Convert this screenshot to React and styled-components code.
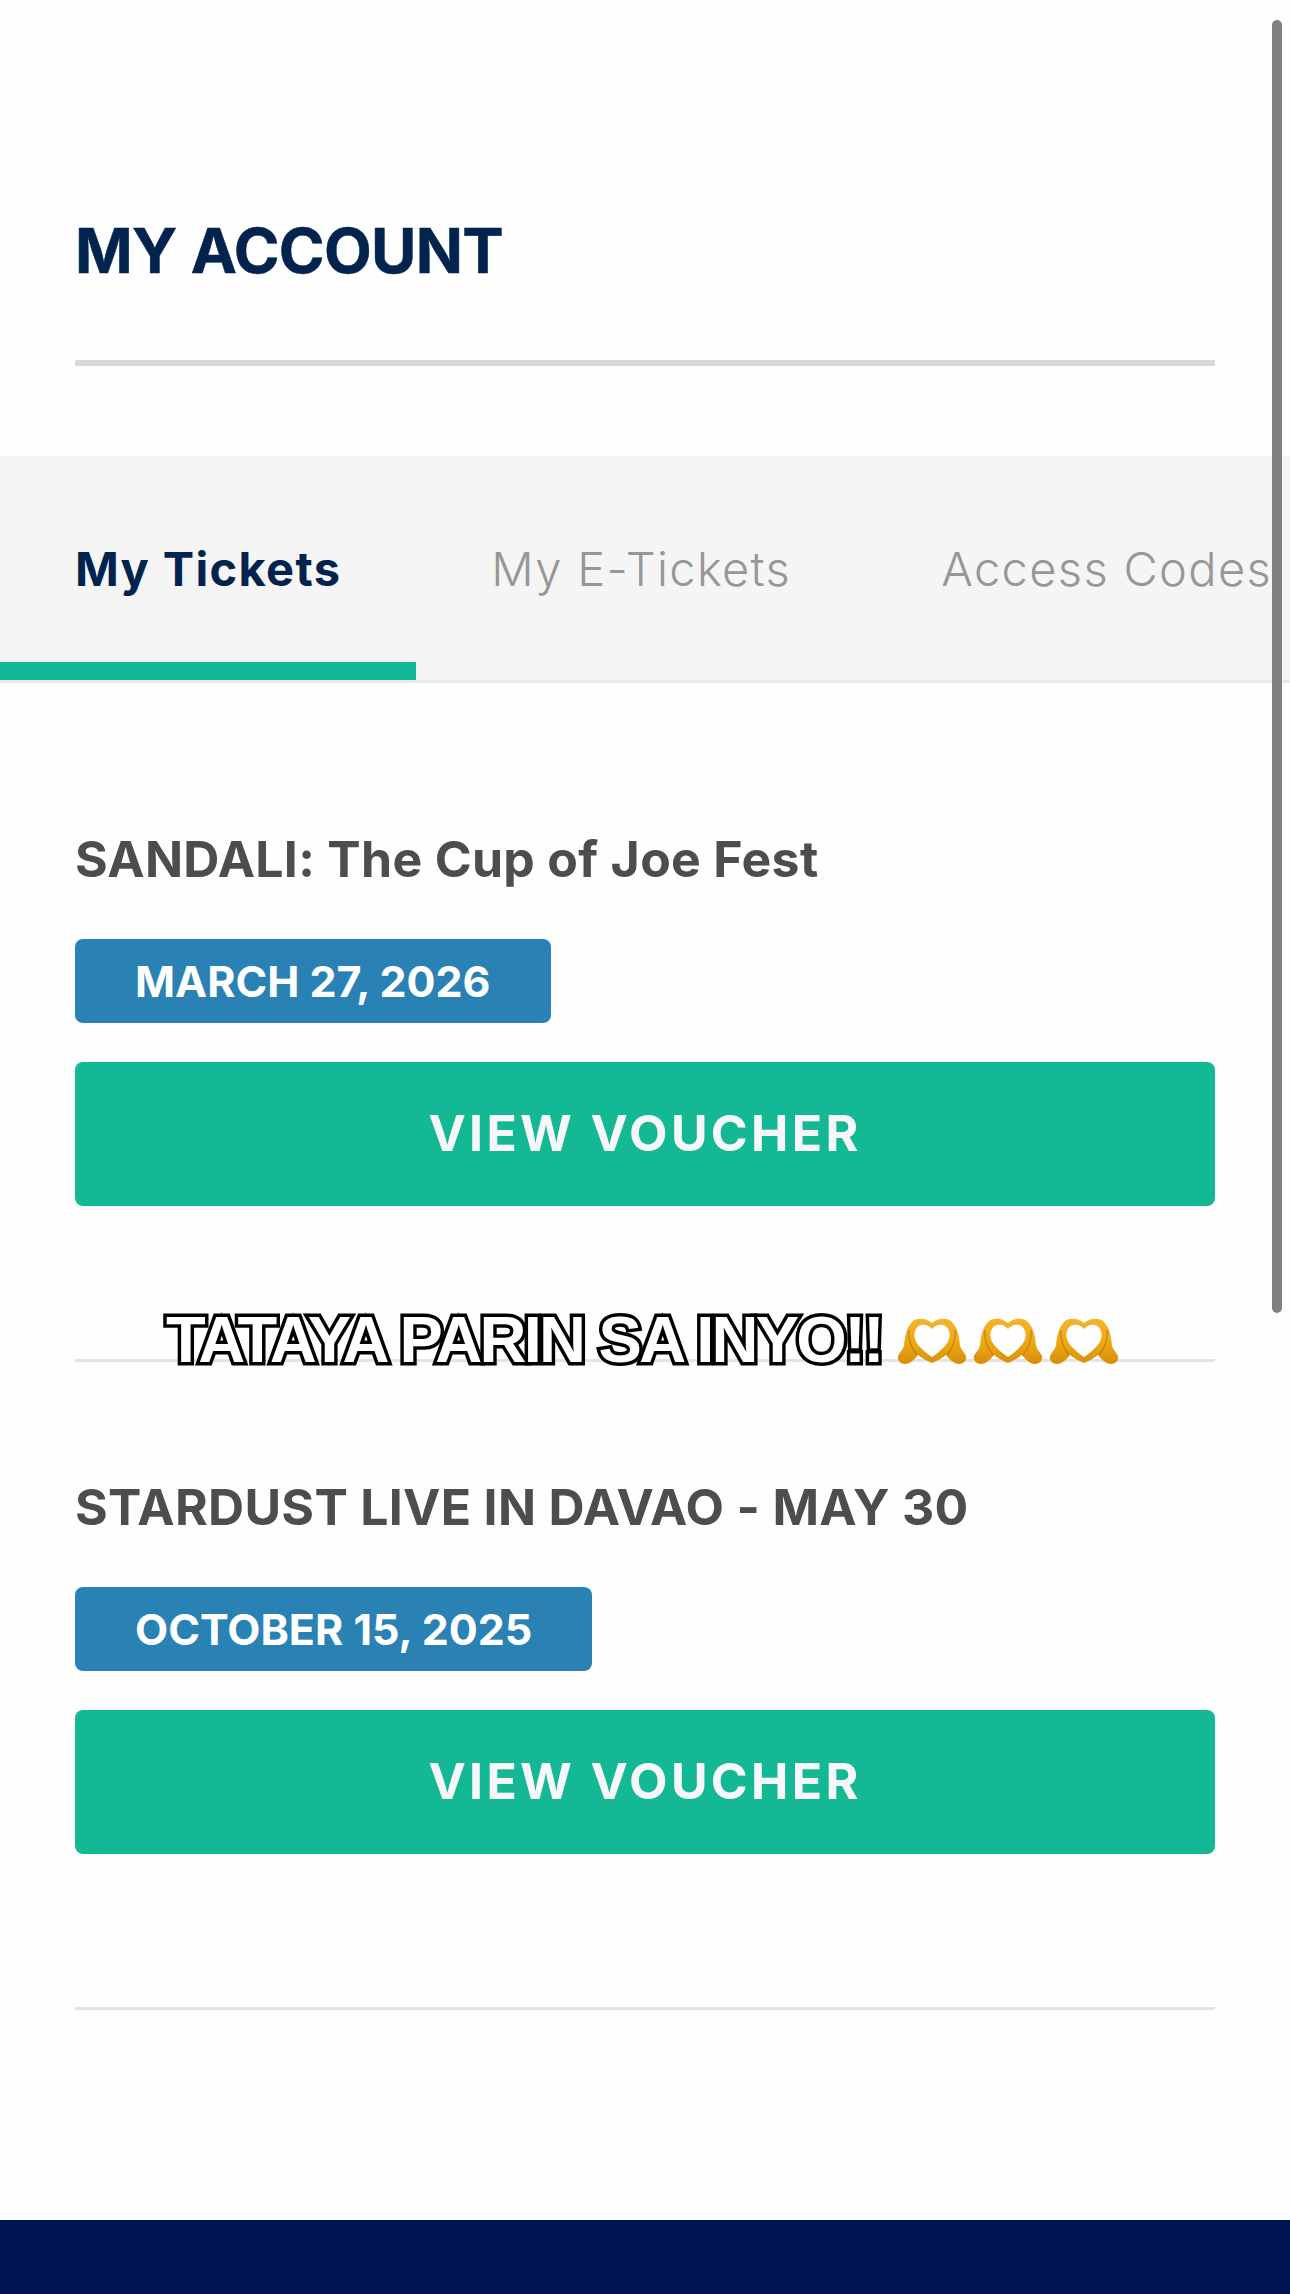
import React from 'react';
import styled, { createGlobalStyle } from 'styled-components';

const GlobalStyle = createGlobalStyle`
  html, body {
    margin: 0;
    padding: 0;
    background: #fefefe;
    font-family: Inter, "Liberation Sans", sans-serif;
  }
`;

const Page = styled.div`
  position: relative;
  width: 1290px;
  height: 2294px;
  overflow: hidden;
  background: #fefefe;
`;

const Header = styled.header`
  padding: 218px 75px 0;
`;

const Title = styled.h1`
  margin: 0;
  height: 66px;
  font-size: 62px;
  line-height: 66px;
  font-weight: 700;
  letter-spacing: -0.7px;
  -webkit-text-stroke: 0.5px #03234f;
  color: #03234f;
`;

const Rule = styled.div`
  height: ${props => props.$thick}px;
  background: ${props => props.$color};
`;

const HeaderRule = styled(Rule)`
  margin-top: 76px;
`;

const Tabs = styled.nav`
  display: flex;
  height: 224px;
  margin-top: 90px;
  overflow: hidden;
  background: #f5f5f5;
  border-bottom: 3px solid #e9e9e9;
`;

const Tab = styled.div`
  display: flex;
  align-items: center;
  flex-shrink: 0;
  padding: 0 75px;
  font-size: 47px;
  letter-spacing: 1.35px;
  font-weight: ${props => (props.$active ? 700 : 300)};
  color: ${props => (props.$active ? '#03234f' : '#979797')};
  box-shadow: ${props => (props.$active ? 'inset 0 -18px 0 #15b894' : 'none')};
`;

const List = styled.div`
  padding: 0 75px;
`;

const Ticket = styled.section`
  padding-top: 116px;
`;

const FirstTicket = styled(Ticket)`
  padding-top: 147px;
`;

const EventName = styled.h2`
  margin: 0;
  height: 58px;
  font-size: 50px;
  line-height: 58px;
  font-weight: 700;
  letter-spacing: 0.3px;
  color: #4d4d4d;
`;

const DateBadge = styled.div`
  display: flex;
  align-items: center;
  box-sizing: border-box;
  width: ${props => props.$width}px;
  height: 84px;
  margin-top: 51px;
  padding-left: 60px;
  border-radius: 8px;
  background: #2a82b4;
  font-size: 43px;
  font-weight: 700;
  color: #fff;
`;

const VoucherButton = styled.button`
  display: block;
  width: 100%;
  height: 144px;
  margin-top: 39px;
  padding: 0 0 3px;
  border: 0;
  border-radius: 8px;
  background: #15b894;
  font-family: inherit;
  font-size: 50px;
  font-weight: 700;
  letter-spacing: 3.3px;
  color: #f7f7fa;
`;

const TicketRule = styled(Rule)`
  margin-top: 153px;
`;

const Footer = styled.footer`
  position: absolute;
  left: 0;
  right: 0;
  bottom: 0;
  height: 74px;
  background: #001355;
`;

const Scrollbar = styled.div`
  position: absolute;
  top: 20px;
  left: 1272px;
  width: 10px;
  height: 1293px;
  border-radius: 5px;
  background: #808080;
`;

// caption sticker that sits on top of the first divider
const Sticker = styled.div`
  position: absolute;
  top: 1304px;
  left: 166px;
  display: flex;
  align-items: center;
  gap: 6px;
`;

const StickerText = styled.span`
  margin-right: 9px;
  font-family: "Liberation Sans", Arial, sans-serif;
  font-size: 65px;
  line-height: 72px;
  font-weight: 700;
  letter-spacing: -2.75px;
  white-space: nowrap;
  color: #fff;
  -webkit-text-stroke: 7px #000;
  paint-order: stroke fill;
`;

const Hands = styled.svg`
  display: block;
  width: 70px;
  height: 47px;
  margin-top: 2px;
`;

const HeartHands = () => (
  <Hands viewBox="0 0 70 47">
    <defs>
      <linearGradient id="hands-fill" x1="0" y1="0" x2="0" y2="1">
        <stop offset="0" stopColor="#f5b52a" />
        <stop offset="0.55" stopColor="#eca815" />
        <stop offset="1" stopColor="#d88c0a" />
      </linearGradient>
    </defs>
    <path
      fillRule="evenodd"
      fill="url(#hands-fill)"
      d="M35 45 C30 43 25 40 21 37 C18 41 13 46 8 46 C3 46 0 42 1 38 C3 34 6 32 7 27 C8 19 9 10 15 4 C20 -1 29 0 35 5 C41 0 50 -1 55 4 C61 10 62 19 63 27 C64 32 67 34 69 38 C70 42 67 46 62 46 C57 46 52 41 49 37 C45 40 40 43 35 45 Z M35 11 C31 6 22 5 19 11 C15 18 19 25 24 30 C27 33 32 37 35 39 C38 37 43 33 46 30 C51 25 55 18 51 11 C48 5 39 6 35 11 Z"
    />
    <path
      fill="none"
      stroke="#c97f06"
      strokeWidth="1.2"
      d="M20 37 C15 31 11 22 12 12 M50 37 C55 31 59 22 58 12"
    />
  </Hands>
);

const tickets = [
  { name: 'SANDALI: The Cup of Joe Fest', date: 'MARCH 27, 2026', badge: 476 },
  { name: 'STARDUST LIVE IN DAVAO - MAY 30', date: 'OCTOBER 15, 2025', badge: 517 },
];

const App = () => (
  <Page>
    <GlobalStyle />
    <Header>
      <Title>MY ACCOUNT</Title>
      <HeaderRule $thick={6} $color="#d9d9d9" />
    </Header>
    <Tabs>
      <Tab $active>My Tickets</Tab>
      <Tab>My E-Tickets</Tab>
      <Tab>Access Codes</Tab>
    </Tabs>
    <List>
      {tickets.map((ticket, index) => {
        const Wrap = index === 0 ? FirstTicket : Ticket;
        return (
          <Wrap key={ticket.name}>
            <EventName>{ticket.name}</EventName>
            <DateBadge $width={ticket.badge}>{ticket.date}</DateBadge>
            <VoucherButton>VIEW VOUCHER</VoucherButton>
            <TicketRule $thick={3} $color="#e4e4e4" />
          </Wrap>
        );
      })}
    </List>
    <Sticker>
      <StickerText>TATAYA PARIN SA INYO!!</StickerText>
      <HeartHands />
      <HeartHands />
      <HeartHands />
    </Sticker>
    <Scrollbar />
    <Footer />
  </Page>
);

export default App;
